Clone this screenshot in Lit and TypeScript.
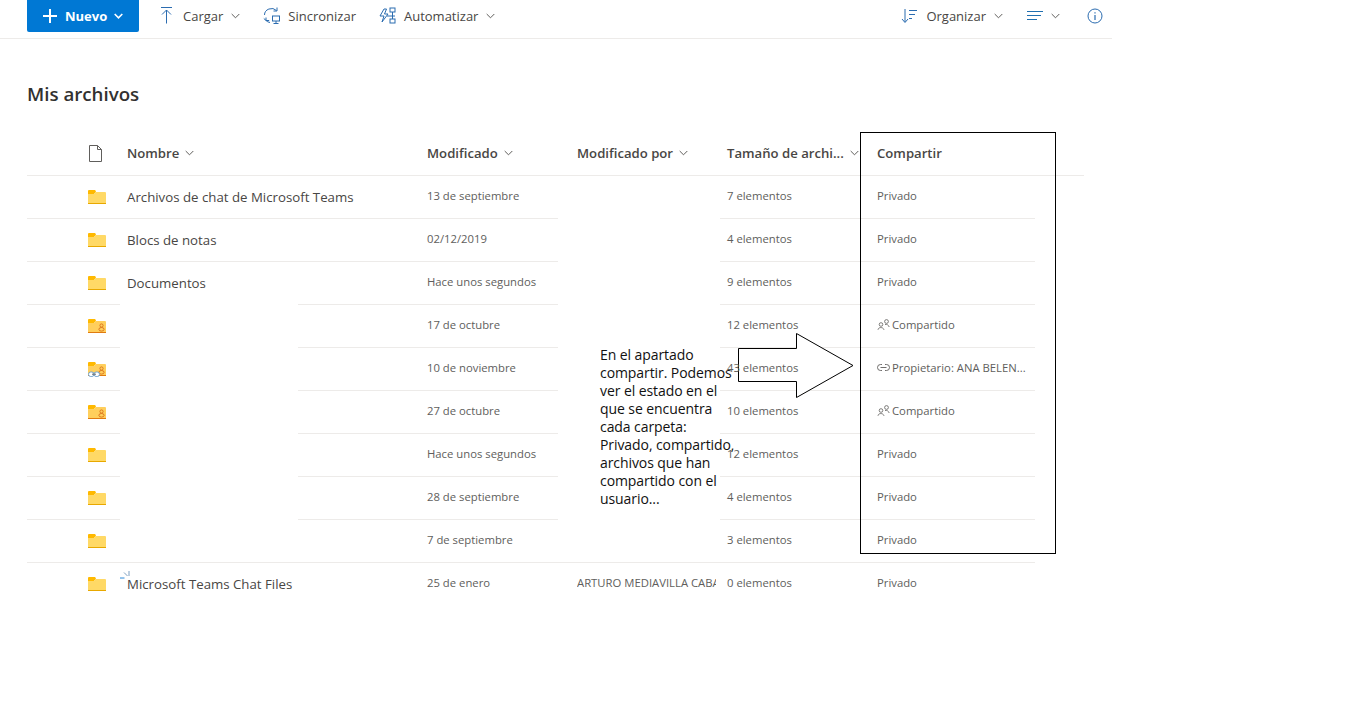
import { LitElement, html, css, svg } from "lit";
import { customElement } from "lit/decorators.js";

const chev = html`<svg class="chev" width="9" height="6" viewBox="0 0 9 6"><path d="M.7 1l3.800 3.800L8.300 1" fill="none" stroke="#605e5c" stroke-width="1"/></svg>`;

function folder(kind: string) {
  const special = kind !== "plain";
  const body = special ? "#ffcf5c" : "#ffd966";
  const edge = special ? "#e07b10" : "#e8a800";
  return html`<svg class="folder" width="18" height="15" viewBox="0 0 18 15">
    ${svg`<path d="M0 4V1a1 1 0 0 1 1-1h5.500a1 1 0 0 1 1 .500L8 2 6 4z" fill="#ffb900"/>`}
    ${svg`<path d="M0 4h6l2-2h9a1 1 0 0 1 1 1v10H0z" fill="${body}"/>`}
    ${svg`<rect x="0" y="13" width="18" height="1" fill="${edge}"/>`}
    ${special ? svg`<g fill="none" stroke="#d9701a" stroke-width="0.900"><circle cx="13.500" cy="6.500" r="1.600"/><ellipse cx="13.500" cy="10.300" rx="2.600" ry="1.800"/></g>` : ""}
    ${kind === "link" ? svg`<g fill="#fff" stroke="#6fa3d0" stroke-width="1"><rect x="0.500" y="10" width="5.500" height="4.500" rx="2.200"/><rect x="6" y="10" width="5.500" height="4.500" rx="2.200"/></g><path d="M4 12.200h4" stroke="#666" stroke-width="1"/>` : ""}
  </svg>`;
}

const sharedIcon = html`<svg class="sh" width="13" height="11" viewBox="0 0 13 11"><g fill="none" stroke="#605e5c" stroke-width="0.8"><circle cx="4" cy="5.500" r="1.800"/><path d="M1 10.800c.2-3 5.300-3 6 0"/><circle cx="9.500" cy="2.500" r="1.900"/><path d="M8 5.500c2-.4 3.700.6 4.200 2.500"/></g></svg>`;
const linkIcon = html`<svg class="sh" width="13" height="11" viewBox="0 0 13 11"><g fill="none" stroke="#605e5c" stroke-width="0.900"><path d="M5 2.500H3.500a3 3 0 0 0 0 6H5"/><path d="M8 2.500h1.500a3 3 0 0 1 0 6H8"/><path d="M3.500 5.500h6"/></g></svg>`;

interface Row { kind: string; name: string; date: string; by?: string; size: string; share: string; icon?: string; sync?: boolean; }
const rows: Row[] = [
  { kind: "plain", name: "Archivos de chat de Microsoft Teams", date: "13 de septiembre", size: "7 elementos", share: "Privado" },
  { kind: "plain", name: "Blocs de notas", date: "02/12/2019", size: "4 elementos", share: "Privado" },
  { kind: "plain", name: "Documentos", date: "Hace unos segundos", size: "9 elementos", share: "Privado" },
  { kind: "shared", name: "", date: "17 de octubre", size: "12 elementos", share: "Compartido", icon: "shared" },
  { kind: "link", name: "", date: "10 de noviembre", size: "43 elementos", share: "Propietario: ANA BELEN...", icon: "link" },
  { kind: "shared", name: "", date: "27 de octubre", size: "10 elementos", share: "Compartido", icon: "shared" },
  { kind: "plain", name: "", date: "Hace unos segundos", size: "12 elementos", share: "Privado" },
  { kind: "plain", name: "", date: "28 de septiembre", size: "4 elementos", share: "Privado" },
  { kind: "plain", name: "", date: "7 de septiembre", size: "3 elementos", share: "Privado" },
  { kind: "plain", name: "Microsoft Teams Chat Files", date: "25 de enero", by: "ARTURO MEDIAVILLA CABALLERO", size: "0 elementos", share: "Privado", sync: true },
];

const noteLines = ["En el apartado", "compartir. Podemos", "ver el estado en el", "que se encuentra", "cada carpeta:", "Privado, compartido,", "archivos que han", "compartido con el", "usuario..."];

@customElement("app-root")
export class AppRoot extends LitElement {
  static styles = css`
    :host { display: block; position: relative; width: 1354px; height: 718px; background: #fff; overflow: hidden;
      font-family: "Open Sans", "Noto Sans", sans-serif; color: #323130; }
    .toolbar { width: 1112px; height: 39px; box-sizing: border-box; border-bottom: 1px solid #edebe9; display: flex; align-items: center; padding-left: 27px; font-size: 13px; }
    .new { width: 112px; height: 32px; align-self: flex-start; background: #0078d4; color: #fff; border-radius: 0 0 2px 2px; display: flex; align-items: center; gap: 7px; padding-left: 15px; box-sizing: border-box; font-weight: 700; font-size: 13px; }
    .new .chev path { stroke: #fff; stroke-width: 1.600; }
    .cmd { display: flex; align-items: center; margin-top: -7px; color: #484644; }
    .cmd .chev { margin-left: 8px; }
    .cmd svg.ic { margin-right: 8px; }
    .c1 { margin-left: 21px; }
    .c1 svg.ic { margin-right: 9px; }
    .c2 { margin-left: 23px; }
    .c3 { margin-left: 23px; }
    .spacer { flex: 1; }
    .c5 { margin-left: 24px; }
    .c5 .chev { margin-left: 7px; }
    .c6 { margin-left: 27px; margin-right: 9px; }
    h1 { margin: 0; font-size: 18.700px; font-weight: 600; line-height: 26px; padding: 42px 0 0 27px; height: 51px; color: #323130; }
    .row { display: grid; grid-template-columns: 100px 300px 150px 150px 150px 158px; width: 1008px; margin-left: 27px; height: 43px; align-items: center; border-bottom: 1px solid #edebe9; box-sizing: border-box; font-size: 11.300px; color: #605e5c; }
    .row.last { border-bottom-color: transparent; }
    .cell { padding-bottom: 4px; }
    .head { width: 1057px; height: 44px; font-size: 13.150px; font-weight: 600; color: #484644; }
    .head > div { display: flex; align-items: center; gap: 6px; white-space: nowrap; }
    .head > .hc { padding-bottom: 2px; }
    .ico { padding-left: 61px; display: flex; align-items: center; }
    .name { font-size: 13.250px; color: #484644; white-space: nowrap; position: relative; }
    .by { overflow: hidden; white-space: nowrap; width: 139px; }
    .size { position: relative; z-index: 1; }
    .share { display: flex; align-items: center; gap: 2px; white-space: nowrap; }
    .sync { position: absolute; left: -7px; top: -4px; }
    .patch { position: absolute; background: #fff; }
    .p1 { left: 120px; top: 304px; width: 178px; height: 258px; }
    .p2 { left: 558px; top: 176px; width: 162px; height: 386px; }
    .box { position: absolute; left: 860px; top: 132px; width: 196px; height: 422px; box-sizing: border-box; border: 1px solid #000; }
    .arrow { position: absolute; left: 737px; top: 332px; }
    .note { position: absolute; left: 600px; top: 346px; font-size: 14px; line-height: 18px; color: #111; letter-spacing: -0.080px; white-space: nowrap; z-index: 2; }
  `;
  render() {
    return html`
      <div class="toolbar">
        <div class="new">
          <svg width="16" height="16" viewBox="0 0 16 16"><path d="M8 1v14M1 8h14" stroke="#fff" stroke-width="2"/></svg>
          <span>Nuevo</span>${chev}
        </div>
        <div class="cmd c1">
          <svg class="ic" width="14" height="17" viewBox="0 0 14 17"><path d="M1 .5h11M6.500 16.500V3M2 7.500L6.500 3 11 7.500" fill="none" stroke="#2b6cb0" stroke-width="1"/></svg>
          Cargar${chev}
        </div>
        <div class="cmd c2">
          <svg class="ic" width="17" height="17" viewBox="0 0 17 17"><g fill="none" stroke="#2b6cb0" stroke-width="1"><path d="M1.500 8a7 6.500 0 0 1 12-4.500M14 .500v3.500h-3.500"/><path d="M.800 11.500l2.200 2h3.200M3 10.500v3"/><path d="M3 13.500a7 7 0 0 0 4 2"/><rect x="9.500" y="9" width="7" height="5"/><path d="M13 14v2.500M10.500 16.500h5"/></g></svg>
          Sincronizar
        </div>
        <div class="cmd c3">
          <svg class="ic" width="17" height="17" viewBox="0 0 17 17"><g fill="none" stroke="#2b6cb0" stroke-width="1"><rect x="11" y="1" width="5" height="4"/><rect x="11" y="12" width="5" height="4"/><path d="M13.500 5v7M8 9h8"/><path d="M5 2L1 9h4l-2 6 6-8H5.500L7.500 2z"/></g></svg>
          Automatizar${chev}
        </div>
        <div class="spacer"></div>
        <div class="cmd">
          <svg class="ic" width="17" height="16" viewBox="0 0 17 16"><g fill="none" stroke="#2b6cb0" stroke-width="1"><path d="M4 1v13M1 11l3 3.500L7 11"/><path d="M8 2.500h8M8 6.500h6M8 10.500h3"/></g></svg>
          Organizar${chev}
        </div>
        <div class="cmd c5">
          <svg width="17" height="10" viewBox="0 0 17 10"><path d="M0 .5h16M0 4.500h14M0 8.500h10" stroke="#1f6fb0" stroke-width="1"/></svg>
          ${chev}
        </div>
        <div class="cmd c6">
          <svg width="16" height="16" viewBox="0 0 16 16"><circle cx="8" cy="8" r="7" fill="none" stroke="#2b6cb0"/><path d="M8 7v5M8 4.200v1.300" stroke="#2b6cb0" stroke-width="1.200"/></svg>
        </div>
      </div>
      <h1>Mis archivos</h1>
      <div class="row head">
        <div class="ico"><svg width="15" height="17" viewBox="0 0 15 17"><path d="M1.500.5h8l4 4v12h-12zM9.500.5v4h4" fill="none" stroke="#605e5c"/></svg></div>
        <div class="hc">Nombre ${chev}</div>
        <div class="hc">Modificado ${chev}</div>
        <div class="hc">Modificado por ${chev}</div>
        <div class="hc">Tamaño de archi... ${chev}</div>
        <div class="hc">Compartir</div>
      </div>
      ${rows.map((r, i) => html`
        <div class="row ${i === rows.length - 1 ? "last" : ""}">
          <div class="ico">${folder(r.kind)}</div>
          <div class="name">
            ${r.sync ? html`<svg class="sync" width="10" height="8" viewBox="0 0 10 8"><path d="M0 7h4.500" stroke="#2b88d8"/><path d="M4 1.500l3.500 3.500M9 0v5" stroke="#7f9fc0" fill="none"/></svg>` : ""}
            ${r.name}
          </div>
          <div class="cell">${r.date}</div>
          <div class="cell by">${r.by ?? ""}</div>
          <div class="cell size">${r.size}</div>
          <div class="cell share">${r.icon === "shared" ? sharedIcon : r.icon === "link" ? linkIcon : ""}<span>${r.share}</span></div>
        </div>`)}
      <div class="patch p1"></div>
      <div class="patch p2"></div>
      <div class="box"></div>
      <svg class="arrow" width="118" height="67" viewBox="0 0 118 67"><path d="M1.500 16.500H59.500V1.500L116 33.500 59.500 65.500V49.500H1.500z" fill="#fff" stroke="#000"/></svg>
      <div class="note">${noteLines.map((l) => html`<div>${l}</div>`)}</div>
    `;
  }
}
